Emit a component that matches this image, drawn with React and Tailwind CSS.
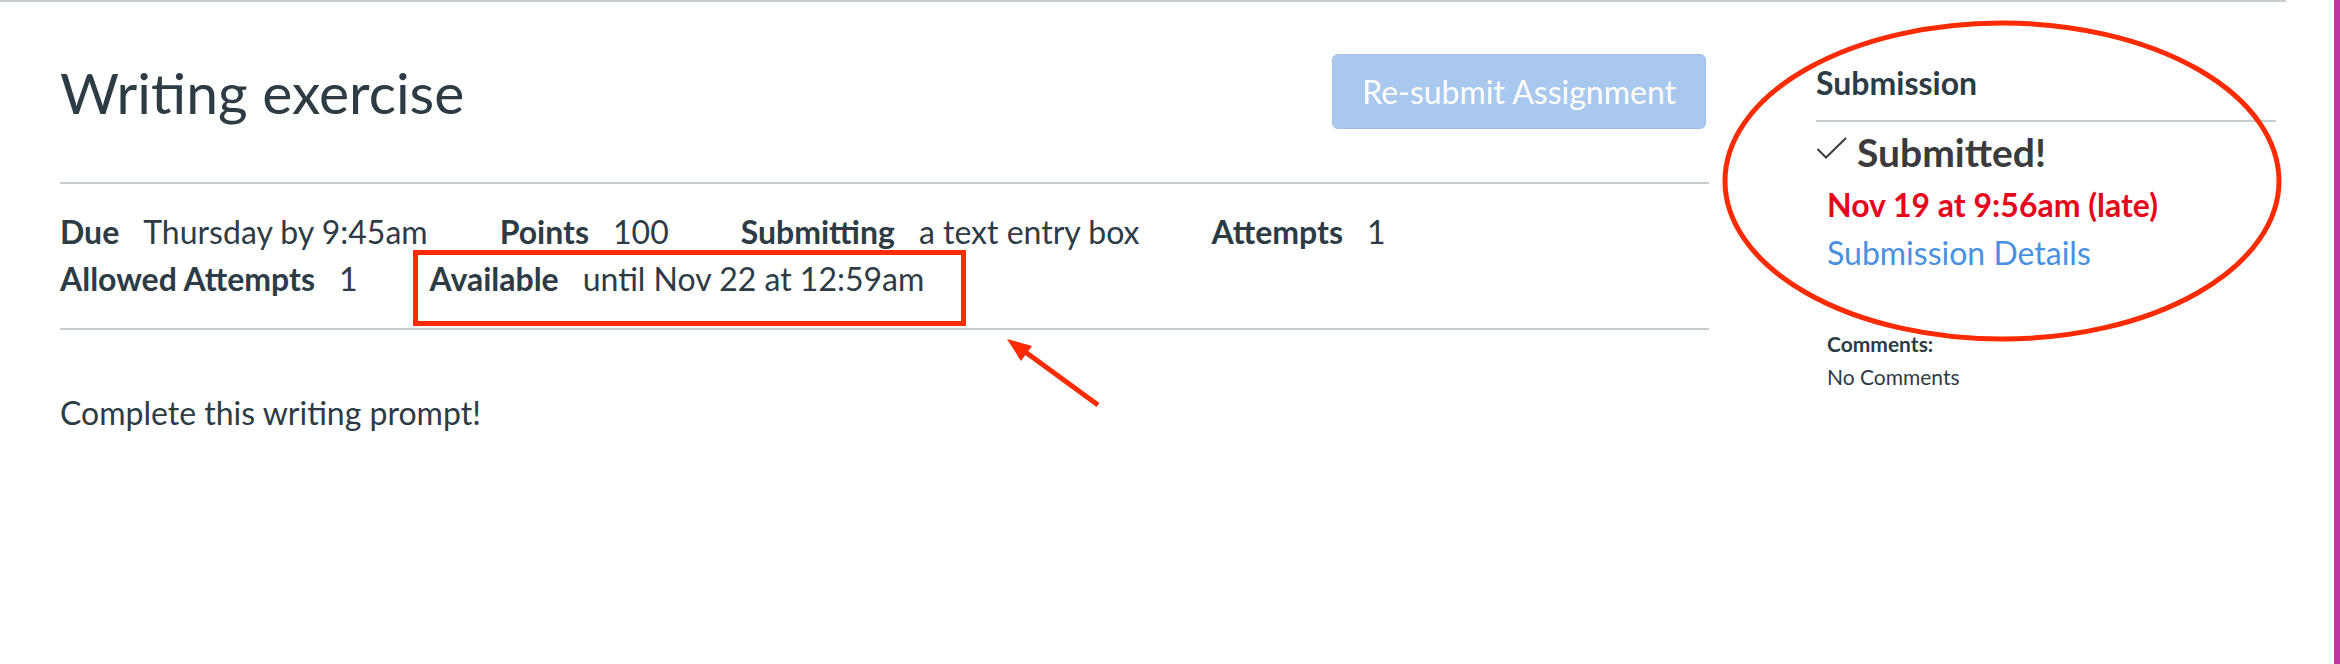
const details = [
  { label: 'Due', value: 'Thursday by 9:45am' },
  { label: 'Points', value: '100' },
  { label: 'Submitting', value: 'a text entry box' },
  { label: 'Attempts', value: '1' },
  { label: 'Allowed Attempts', value: '1' },
  { label: 'Available', value: 'until Nov 22 at 12:59am' },
];

function CheckIcon() {
  return (
    <svg width="32" height="22" viewBox="0 0 32 22" className="mr-[9px] mt-[-8px]">
      <path d="M1.5 12 L10 20.5 L30 1" fill="none" stroke="#3b3b3b" strokeWidth="2" />
    </svg>
  );
}

// red annotations drawn on top of the page
function Annotations() {
  return (
    <svg
      className="absolute left-0 top-0 pointer-events-none"
      width="2340"
      height="664"
      viewBox="0 0 2340 664"
    >
      <rect x="415.5" y="252.5" width="548" height="71" fill="none" stroke="#fe2a00" strokeWidth="5" />
      <ellipse cx="2002" cy="181" rx="277" ry="158" fill="none" stroke="#fe2a00" strokeWidth="5" />
      <line x1="1098" y1="405" x2="1024" y2="351" stroke="#fe2a00" strokeWidth="5" />
      <polygon points="1007,339 1032,346 1021,361" fill="#fe2a00" />
    </svg>
  );
}

export default function App() {
  return (
    <div className="relative flex w-[2340px] h-[664px] bg-white text-[#2d3b45] font-['Lato','Liberation_Sans',sans-serif]">
      <div className="w-[2334px]">
        <div className="w-[2286px] border-t-2 border-[#c7cdd1] flex">
          {/* Main column */}
          <div className="ml-[60px] w-[1649px]">
            <div className="flex items-center justify-between pt-[52px] pb-[53px] border-b-2 border-[#c7cdd1]">
              <h1 className="text-[57px] leading-[72px] font-normal">Writing exercise</h1>
              <button className="mr-[3px] h-[75px] px-[29px] rounded-[6px] bg-[#a9c8ee] border border-[#9fbfe8] text-white text-[32px] leading-none">
                Re-submit Assignment
              </button>
            </div>

            <ul className="flex flex-wrap gap-x-[72px] pt-[24px] pb-[26px] border-b-2 border-[#c7cdd1] text-[32px] leading-[47px]">
              {details.map((d) => (
                <li key={d.label} className="flex gap-[24px]">
                  <span className="font-bold">{d.label}</span>
                  <span>{d.value}</span>
                </li>
              ))}
            </ul>

            <p className="mt-[59px] text-[32px] leading-[47px]">Complete this writing prompt!</p>
          </div>

          {/* Sidebar */}
          <aside className="ml-[107px] w-[460px]">
            <h2 className="pt-[58px] pb-[14px] border-b-2 border-[#c7cdd1] text-[32px] leading-[46px] font-bold">
              Submission
            </h2>
            <div className="mt-[6px] flex items-center text-[39px] leading-[48px] font-bold text-[#3b3b3b]">
              <CheckIcon />
              Submitted!
            </div>
            <div className="pl-[11px]">
              <div className="mt-[5px] text-[32px] leading-[48px] font-bold text-[#e5051c]">
                Nov 19 at 9:56am (late)
              </div>
              <a className="block text-[32px] leading-[48px] text-[#4a90e2]">Submission Details</a>
              <div className="mt-[50px] text-[21px] leading-[33px] font-bold">Comments:</div>
              <div className="text-[21px] leading-[33px]">No Comments</div>
            </div>
          </aside>
        </div>
      </div>
      <div className="w-[6px] h-full bg-[#bd35a3]" />
      <Annotations />
    </div>
  );
}
